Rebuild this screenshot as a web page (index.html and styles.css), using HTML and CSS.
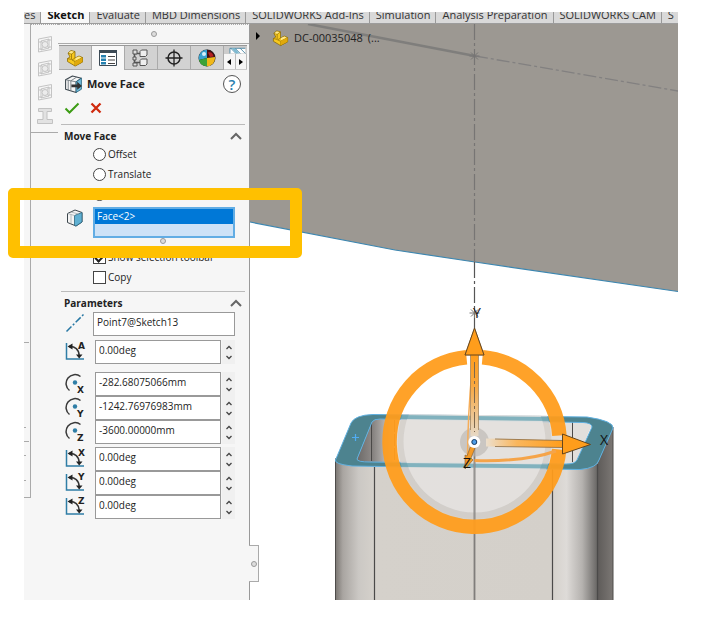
FILE: index.html
```
<!DOCTYPE html>
<html lang="en">
<head>
<meta charset="utf-8">
<title>Move Face</title>
<link rel="stylesheet" href="styles.css">
</head>
<body>
<svg class="defs" aria-hidden="true">
  <symbol id="i-part" viewBox="0 0 18 18">
    <path d="M2 4 5 1.500 9 2.500V9l4-2 3.500 1.500V13L9 17 1.500 12.500V9.500L4 8Z" fill="#f7c81e" stroke="#8a6a08" stroke-width=".8" stroke-linejoin="round"/>
    <path d="m9 9-3 2 3 1.500V17l7.500-4V8.500L9 12.500M2 4l3.500 1L9 2.500M5.500 5v5.500L1.500 9.500" fill="none" stroke="#8a6a08" stroke-width=".7"/>
    <path d="M9 12.500 16.500 8.500V13L9 17Z" fill="#e0a90c"/>
    <path d="M2.500 4 5 2l3 .7L5.500 4.500ZM9.500 9l3.500-1.500 2.500 1L9.500 11.500Z" fill="#ffe98c"/>
  </symbol>
  <symbol id="i-cube" viewBox="0 0 18 18">
    <path d="M1.500 4.500 9 1l7 2.500V13l-6 4-8.500-3.500Z" fill="#f4f4f4" stroke="#3c464d" stroke-width="1" stroke-linejoin="round"/>
    <path d="M8.500 6.500 16 3.500V13l-6 4-1.500-.5Z" fill="#5fb0d2" stroke="#2b6680" stroke-width=".8"/>
    <path d="m1.500 4.500 7 2M5 3l7.500 2M5 5.500V15" fill="none" stroke="#9aa3a8" stroke-width=".7"/>
  </symbol>
  <symbol id="i-ghost" viewBox="0 0 16 18">
    <path d="M1.500 4 14.500 1.500v13L1.500 17Z M4 6l8-2v9l-8 2Z M4 6l8 7M12 4 4 15M1.500 7h3m7-2h3m-13 9h3m7-2h3" fill="none" stroke="#c4c4c4"/>
    <circle cx="8" cy="9.500" r="3" fill="#ececec" stroke="#c4c4c4"/>
  </symbol>
  <symbol id="i-angle" viewBox="0 0 20 20">
    <path d="M1.500 2v16h17.500" fill="none" stroke="#2f7ea6" stroke-width="1.500"/>
    <path d="M4 5.500c6-.5 10 3 10.200 9" fill="none" stroke="#333" stroke-width="1.500"/>
    <path d="M2.500 5.500 7.500 2.500v6ZM11 13.500h6.500L14.200 17.500Z" fill="#222"/>
  </symbol>
  <symbol id="i-center" viewBox="0 0 20 20">
    <path d="M4.500 17.500A8.500 8.500 0 0 1 15.500 3.500" fill="none" stroke="#3a3a3a" stroke-width="1.500"/>
    <circle cx="10" cy="9.500" r="2.200" fill="#2f7ea6"/>
  </symbol>
  <symbol id="i-up" viewBox="0 0 8 5"><path d="m1.500 4 2.500-2.500L6.500 4" fill="none" stroke="#444" stroke-width="1.300"/></symbol>
  <symbol id="i-down" viewBox="0 0 8 5"><path d="M1.500 1 4 3.500 6.500 1" fill="none" stroke="#444" stroke-width="1.300"/></symbol>
  <symbol id="i-fold" viewBox="0 0 12 8"><path d="m1 7 5-5 5 5" fill="none" stroke="#666" stroke-width="2"/></symbol>
</svg>

<main class="app">
  <nav class="ribbon">
    <a class="ribbon-tab first" href="#">es</a>
    <a class="ribbon-tab active" href="#">Sketch</a>
    <a class="ribbon-tab" href="#">Evaluate</a>
    <a class="ribbon-tab" href="#">MBD Dimensions</a>
    <a class="ribbon-tab" href="#">SOLIDWORKS Add-Ins</a>
    <a class="ribbon-tab" href="#">Simulation</a>
    <a class="ribbon-tab" href="#">Analysis Preparation</a>
    <a class="ribbon-tab" href="#">SOLIDWORKS CAM</a>
    <a class="ribbon-tab last" href="#">S</a>
  </nav>

  <div class="work">
    <div class="edge" aria-hidden="true">
      <svg width="6" height="473" viewBox="0 0 6 473"><path d="M0 318.500h5M0 417.500h5M0 403.500h2M0 431.500h2M0 456.500h2" stroke="#aaa"/></svg>
    </div>

    <div class="tools">
      <button aria-label="Weldment"><svg><use href="#i-ghost"/></svg></button>
      <button aria-label="Gusset"><svg><use href="#i-ghost"/></svg></button>
      <button aria-label="End cap"><svg><use href="#i-ghost"/></svg></button>
      <button aria-label="Structural member"><svg viewBox="0 0 16 18"><path d="M1.500 1.500h13v3H10v8h5.500v4H.5v-4H6v-8H1.500Z" fill="#e2e2e2" stroke="#c2c2c2"/></svg></button>
    </div>

    <section class="panel">
      <div class="panel-grip"><i class="dot"></i></div>
      <div class="manager">
        <button class="m-tab" aria-label="Feature tree"><svg viewBox="0 0 18 18"><use href="#i-part"/></svg></button>
        <button class="m-tab active" aria-label="Properties"><svg viewBox="0 0 18 18">
          <path d="M.5 1.500h17v15H.5Z" fill="#fff" stroke="#3c4a55"/><path d="M0 1h18v3H0Z" fill="#3c4a55"/>
          <path d="M2 6h5v2.500H2Zm0 3.500h5V12H2ZM2 13h5v2.500H2Z" fill="#2581b0"/><path d="M9 7.500h7M9 11h7M9 14.500h7" stroke="#444"/></svg></button>
        <button class="m-tab" aria-label="Configurations"><svg viewBox="0 0 18 18">
          <path d="M2.500 1v16M2.500 4.500h6M2.500 13.500h6" fill="none" stroke="#555" stroke-width="1.500"/><path d="M1 1h4v4H1Zm0 7h3v3H1Zm0 6h4v3H1Z" fill="#ddd" stroke="#555"/>
          <path d="M8 2.500 9.500 1H15v5l-1.500 1.500H8ZM8 11.500 9.500 10H15v5l-1.500 1.500H8Z" fill="#eee" stroke="#555"/></svg></button>
        <button class="m-tab" aria-label="Dimensions"><svg viewBox="0 0 18 18"><circle cx="9" cy="9" r="6" fill="none" stroke="#222" stroke-width="1.500"/><path d="M9 .5v17M.5 9h17" stroke="#222" stroke-width="1.300"/></svg></button>
        <button class="m-tab" aria-label="Appearances"><svg viewBox="0 0 18 18">
          <circle cx="9" cy="9" r="8.500" fill="#222"/><path d="M9 9 1 11A8.200 8.200 0 0 1 9 .8Z" fill="#38a2cf"/><path d="M9 9V.8A8.200 8.200 0 0 1 17 8Z" fill="#401014"/><path d="M9 9 17 8A8.200 8.200 0 0 1 9 17.200Z" fill="#f0b81a"/><path d="M9 9v8.200A8.200 8.200 0 0 1 1 11Z" fill="#3da339"/><path d="M10 3.500c3-1 5 1 5.500 4L12 8Z" fill="#b52121"/><circle cx="6" cy="5" r="2" fill="#d6f0fb"/></svg></button>
        <div class="m-more">
          <svg viewBox="0 0 27 8"><path d="M7 8V2h18v6Z" fill="#fff"/><path d="M7 2h18M7 2v6M8 2l6 6M13 2l6 6M19 2l6 6" stroke="#3f7f9d" fill="none"/><path d="M9 2h4l5 6h-4Z" fill="#7db9d0"/></svg>
          <div class="m-arrows">
            <button aria-label="Previous tabs"><svg viewBox="0 0 6 8"><path d="M5 1v6L1 4Z"/></svg></button>
            <button aria-label="Next tabs"><svg viewBox="0 0 6 8"><path d="M1 1v6l4-3Z"/></svg></button>
          </div>
        </div>
      </div>

      <header class="title">
        <svg class="title-icon" viewBox="0 0 18 18">
          <path d="M1.500 4.500 8 1l8.500 2-5 3.500v10L1.500 13.500Z" fill="#f4f4f4" stroke="#3c464d" stroke-linejoin="round"/>
          <path d="m11.500 6.500 5-3.500v10.500l-5 3Z" fill="#6fbbdc" stroke="#2b6680" stroke-width=".8"/>
          <path d="m1.500 4.500 5 1V15M6.500 5.500 12 2M4 5v9.500M6.500 5.500l5 1" fill="none" stroke="#6b757b" stroke-width=".8"/>
          <path d="M7 9h5.500V6.500L17 10.500 12.500 14v-2.500H7Z" fill="#333"/>
        </svg>
        <h1>Move Face</h1>
        <button class="help" aria-label="Help">?</button>
      </header>

      <div class="confirm">
        <button aria-label="OK"><svg width="16" height="12" viewBox="0 0 16 12"><path d="M1.500 6.500 5.500 10.500 14.500 1.500" fill="none" stroke="#3c9c14" stroke-width="2"/></svg></button>
        <button aria-label="Cancel"><svg width="12" height="12" viewBox="0 0 12 12"><path d="m1.500 1.500 9 9M10.500 1.500l-9 9" fill="none" stroke="#cf2a0e" stroke-width="2.300"/></svg></button>
      </div>

      <section class="group">
        <div class="group-head"><h2>Move Face</h2><button aria-label="Collapse Move Face"><svg><use href="#i-fold"/></svg></button></div>
        <label class="choice"><input type="radio" name="mode">Offset</label>
        <label class="choice"><input type="radio" name="mode">Translate</label>
        <label class="choice"><input type="radio" name="mode">Rotate</label>
        <div class="pick">
          <svg class="pick-icon"><use href="#i-cube"/></svg>
          <ul class="pick-list" aria-label="Faces to move"><li>Face&lt;2&gt;</li></ul>
        </div>
        <div class="pick-grip"><i class="dot"></i></div>
        <label class="choice"><input type="checkbox" checked>Show selection toolbar</label>
        <label class="choice"><input type="checkbox">Copy</label>
      </section>

      <section class="group">
        <div class="group-head"><h2>Parameters</h2><button aria-label="Collapse Parameters"><svg><use href="#i-fold"/></svg></button></div>
        <div class="field axis">
          <svg viewBox="0 0 20 20"><path d="M1.500 18.500 18.500 1.500" stroke="#2878a4" stroke-width="1.500" stroke-dasharray="7 2 2 2"/></svg>
          <input aria-label="Axis" value="Point7@Sketch13">
        </div>
        <div class="field">
          <svg viewBox="0 0 20 20"><use href="#i-angle"/><text x="13" y="8">A</text></svg>
          <input aria-label="Angle" value="0.00deg">
          <span class="spin"><button aria-label="Increase"><svg><use href="#i-up"/></svg></button><button aria-label="Decrease"><svg><use href="#i-down"/></svg></button></span>
        </div>
        <div class="field-set origin">
          <div class="field">
            <svg viewBox="0 0 20 20"><use href="#i-center"/><text x="12" y="20">X</text></svg>
            <input aria-label="X origin" value="-282.68075066mm">
            <span class="spin"><button aria-label="Increase"><svg><use href="#i-up"/></svg></button><button aria-label="Decrease"><svg><use href="#i-down"/></svg></button></span>
          </div>
          <div class="field">
            <svg viewBox="0 0 20 20"><use href="#i-center"/><text x="12" y="20">Y</text></svg>
            <input aria-label="Y origin" value="-1242.76976983mm">
            <span class="spin"><button aria-label="Increase"><svg><use href="#i-up"/></svg></button><button aria-label="Decrease"><svg><use href="#i-down"/></svg></button></span>
          </div>
          <div class="field">
            <svg viewBox="0 0 20 20"><use href="#i-center"/><text x="12" y="20">Z</text></svg>
            <input aria-label="Z origin" value="-3600.00000mm">
            <span class="spin"><button aria-label="Increase"><svg><use href="#i-up"/></svg></button><button aria-label="Decrease"><svg><use href="#i-down"/></svg></button></span>
          </div>
        </div>
        <div class="field-set">
          <div class="field">
            <svg viewBox="0 0 20 20"><use href="#i-angle"/><text x="13" y="8">X</text></svg>
            <input aria-label="X angle" value="0.00deg">
            <span class="spin"><button aria-label="Increase"><svg><use href="#i-up"/></svg></button><button aria-label="Decrease"><svg><use href="#i-down"/></svg></button></span>
          </div>
          <div class="field">
            <svg viewBox="0 0 20 20"><use href="#i-angle"/><text x="13" y="8">Y</text></svg>
            <input aria-label="Y angle" value="0.00deg">
            <span class="spin"><button aria-label="Increase"><svg><use href="#i-up"/></svg></button><button aria-label="Decrease"><svg><use href="#i-down"/></svg></button></span>
          </div>
          <div class="field">
            <svg viewBox="0 0 20 20"><use href="#i-angle"/><text x="13" y="8">Z</text></svg>
            <input aria-label="Z angle" value="0.00deg">
            <span class="spin"><button aria-label="Increase"><svg><use href="#i-up"/></svg></button><button aria-label="Decrease"><svg><use href="#i-down"/></svg></button></span>
          </div>
        </div>
      </section>
    </section>

    <section class="viewport" aria-label="Model view">
      <svg class="scene" viewBox="250 24 428 576" preserveAspectRatio="xMinYMin slice">
        <defs>
          <linearGradient id="body" gradientUnits="userSpaceOnUse" x1="335" x2="598" y1="0" y2="0">
            <stop offset="0" stop-color="#77736f"/><stop offset=".03" stop-color="#a9a5a1"/><stop offset=".09" stop-color="#cbc8c4"/><stop offset=".15" stop-color="#d5d1cb"/>
            <stop offset=".82" stop-color="#d4d0ca"/><stop offset=".88" stop-color="#dedbd8"/><stop offset=".94" stop-color="#b5b2af"/><stop offset="1" stop-color="#656361"/>
          </linearGradient>
          <linearGradient id="side" x1="0" x2="1"><stop offset="0" stop-color="#5f5c5a"/><stop offset="1" stop-color="#7b7774"/></linearGradient>
          <linearGradient id="wall" gradientUnits="userSpaceOnUse" x1="356" x2="394" y1="0" y2="0">
            <stop offset="0" stop-color="#6a6765"/><stop offset=".42" stop-color="#8d8987"/><stop offset=".43" stop-color="#84807e"/><stop offset="1" stop-color="#d8d5d2"/>
          </linearGradient>
          <linearGradient id="up" x1="0" x2="0" y1="0" y2="1"><stop offset="0" stop-color="#ff9d1b"/><stop offset=".35" stop-color="#f9a63c"/><stop offset="1" stop-color="#e7d9c5"/></linearGradient>
          <linearGradient id="right"><stop offset="0" stop-color="#ecdfcd"/><stop offset=".4" stop-color="#fab65c"/><stop offset="1" stop-color="#ff9d1b"/></linearGradient>
          <clipPath id="solid"><path d="M335 460 352 422Q357 414 373 414L587 416Q613 418 613 427V600H335Z"/></clipPath>
        </defs>

        <path d="M250 24H678V291.500L475 262 395 250 250 222Z" fill="#9c9892"/>
        <path d="m250 222 145 28 80 12 203 29.500" fill="none" stroke="#3c86b0" stroke-width="1.200"/>
        <path d="m308 24 167 32" stroke="#7f7e7c" stroke-width="2.500"/>
        <path d="m475 56 203 35" stroke="#828080" stroke-width="1.300" stroke-dasharray="13 3 3 3"/>
        <path d="M474.500 24v238" stroke="#777574" stroke-width="1.200" stroke-dasharray="16 3 3 3"/>
        <path d="M474.500 262v66" stroke="#555" stroke-width="1.200" stroke-dasharray="16 3 3 3"/>
        <path id="star" d="M474.500 51v10M469.500 56h10M471 52.500l7 7M478 52.500l-7 7" stroke="#767574"/>
        <use href="#star" y="257"/>

        <path d="M335 458 352 466 587 468 598 463V600H335Z" fill="url(#body)"/>
        <path d="M598 462 613 427V600H598Z" fill="url(#side)"/>
        <path d="M357 459 372 422Q374 419 380 419L583 423Q592 423 591 427L577 460Q575 464 566 464L370 462Q358 463 357 459Z" fill="#e2dfdc"/>
        <path d="M357 459 372 422Q374 419 380 419H394V462.500L370 462Q358 463 357 459Z" fill="url(#wall)"/>
        <path d="M572.500 422v40M371.500 423v38" stroke="#4b4948"/>
        <path d="M394.500 420v43" stroke="#8b6d44" stroke-dasharray="12 2"/>
        <path d="M374.500 467V600M552.500 467V600M597.500 464V600" stroke="#4b4a49" stroke-width="1.200"/>
        <path d="M335.500 460V600M613 427V600" stroke="#4e4c4a"/>
        <path fill-rule="evenodd" d="M335.500 460 351 423Q355 415 373 414.500L587 417Q614 421 613 428L599 460Q597 468 580 469.500L352 466Q334 464 335.500 460ZM357 459Q357 462 370 462L566 464Q575 464 577 460L592 427Q592 423 583 422.500L380 419Q374 419 372 422Z" fill="#4d838f" stroke="#5fb0e0"/>
        <path d="M352 437.500h7M355.500 434v7" stroke="#50adf5" stroke-width="1.200"/>

        <g clip-path="url(#solid)">
          <circle cx="474.500" cy="441.500" r="77" fill="#d1cdc9" opacity=".72"/>
          <circle cx="474.500" cy="441.500" r="71" fill="#e7e5e2" opacity=".8"/>
          <path d="m399 417 152 2M399 465l152 1.500" stroke="#5fa3b3" stroke-width="4" opacity=".72"/>
        </g>
        <path d="M474.500 442V600" stroke="#777573" stroke-width="1.800" opacity=".9"/>
        <path d="M474.500 462V534" stroke="#a5a3a1" stroke-width="1.500" opacity=".6"/>

        <path d="M482.500 357.200A85 85 0 0 1 559.400 435.500M559.200 449.500A85 85 0 1 1 466.500 357.200" fill="none" stroke="#ff9c1c" stroke-width="14.500" opacity=".94"/>
        <circle cx="474.500" cy="442" r="14.500" fill="#b9b4af" opacity=".6"/>
        <path d="M474.500 460.500Q525 462 556 451" fill="none" stroke="#f5a449" stroke-width="3"/>
        <path d="M472 370Q468 412 467.500 456" fill="none" stroke="#f5ad59" stroke-width="1.500"/>
        <path d="M470.500 436V354.500H478.500V436Z" fill="url(#up)"/>
        <path d="M470.500 430V355H465L474.500 328 484 355H478.500V430" fill="none" stroke="#9a7a51" stroke-width=".7"/>
        <path d="M465 355 474.500 328 484 355Z" fill="#ff9d1b" stroke="#65451c"/>
        <path d="M474.500 362v70" stroke="#7d684e" stroke-dasharray="16 3 3 3"/>
        <path d="m486 438.500 77 2v7l-77-1Z" fill="url(#right)"/>
        <path d="m495 439 68 1.500M495 446.500l68 1" stroke="#8a6c45" stroke-width=".8"/>
        <path d="m562.500 434 28 10.500-28 9.500Z" fill="#ff9d1b" stroke="#65451c"/>
        <path d="m471 445 4 3-4 10 2 2-8 9v-14l2 1Z" fill="#f39a27" stroke="#80592b" stroke-width=".6"/>
        <circle cx="474.300" cy="442" r="6" fill="#fff"/>
        <circle cx="474.300" cy="442" r="2.500" fill="#4e9de8" stroke="#173c63"/>
        <text x="473" y="318">Y</text>
        <text x="600" y="445">X</text>
        <text x="463" y="468">Z</text>
      </svg>
      <div class="tree">
        <svg class="tree-arrow" viewBox="0 0 6 8"><path d="M1 0v8l4-4Z"/></svg>
        <svg class="tree-icon" viewBox="0 0 18 18"><use href="#i-part"/></svg>
        <span>DC-00035048</span><span>(...</span>
      </div>
      <button class="splitter" aria-label="Resize panel"><i class="dot"></i></button>
    </section>
  </div>
</main>
<div class="highlight" aria-hidden="true"></div>
</body>
</html>
```
FILE: styles.css
```
* { box-sizing: border-box; }

body {
  margin: 0;
  position: relative;
  background: #fff;
  color: #222;
  font: 10px/16px "Open Sans", "Noto Sans", sans-serif;
}

button {
  border: 0;
  padding: 0;
  background: none;
  display: grid;
  place-items: center;
  font-family: inherit;
}

h1, h2 { margin: 0; }
svg { display: block; }
.defs { position: absolute; width: 0; height: 0; }

.app {
  margin: 12px 39px 19px 24px;
  min-height: calc(100vh - 31px);
  display: flex;
  flex-direction: column;
  overflow: hidden;
}

/* Ribbon */
.ribbon {
  height: 12px;
  display: flex;
  align-items: flex-end;
  overflow: hidden;
  background: #d9d9d9;
  border-bottom: 1px solid #9c9c9c;
}
.ribbon-tab {
  flex: none;
  padding: 0 5px 0 6px;
  border-right: 1px solid #999;
  color: #333;
  font-size: 11px;
  text-decoration: none;
  white-space: nowrap;
}
.ribbon-tab.first { padding-left: 0; }
.ribbon-tab.last { flex: 1; border-right: 0; }
.ribbon-tab.active { background: #f8f8f8; color: #111; font-weight: 700; }

.work { flex: 1; display: flex; background: #f6f6f6; }

.edge {
  flex: none;
  width: 7px;
  height: 474px;
  border-right: 1px solid #aaa;
  border-bottom: 1px solid #aaa;
}

.tools {
  flex: none;
  width: 27px;
  height: 109px;
  padding: 7px 0 4px;
  display: flex;
  flex-direction: column;
  border-top: 1px dotted #aaa;
  border-bottom: 1px solid #aaa;
}
.tools button { height: 24px; }
.tools svg { width: 16px; height: 18px; }

/* Property panel */
.panel {
  flex: none;
  width: 192px;
  border-top: 1px dotted #aaa;
  border-right: 1px solid #999;
}
.dot {
  width: 6px;
  height: 6px;
  border: 1px solid #999;
  border-radius: 50%;
  background: #ddd;
}
.panel-grip {
  height: 19px;
  display: grid;
  place-items: center;
  border-bottom: 1px solid #aaa;
}
.manager {
  height: 25px;
  margin: 1px 2px 0 1px;
  display: flex;
  border-top: 1px solid #999;
}
.m-tab {
  width: 33px;
  background: #d2d2d2;
  border-right: 1px solid #aaa;
  border-bottom: 1px solid #aaa;
}
.m-tab.active { background: #f8f8f8; border-bottom: 0; }
.m-tab svg { width: 18px; height: 18px; }
.m-more { flex: 1; background: #ccc; }
.m-more > svg { width: 100%; height: 8px; }
.m-arrows { display: flex; height: 15px; }
.m-arrows button { flex: 1; background: #f6f6f6; border-right: 1px solid #bbb; }
.m-arrows svg { width: 6px; height: 8px; }

.title {
  height: 28px;
  padding: 0 8px 0 6px;
  display: flex;
  align-items: center;
  gap: 4px;
}
.title-icon { width: 19px; height: 19px; }
.title h1 { flex: 1; font-size: 11px; }
.help {
  width: 18px;
  height: 18px;
  border: 1px solid #555;
  border-radius: 50%;
  background: #fff;
  color: #2a7fae;
  font-size: 15px;
  font-weight: 600;
  line-height: 16px;
}
.confirm {
  height: 20px;
  margin-bottom: 6px;
  padding-left: 6px;
  display: flex;
  align-items: center;
  gap: 10px;
}

.group {
  margin: 0 4px 4px 3px;
  padding-top: 2px;
  border-top: 1px solid #bbb;
}
.group-head {
  height: 17px;
  padding: 0 3px;
  display: flex;
  align-items: center;
  justify-content: space-between;
}
.group-head h2 { font-size: 10px; }
.group-head svg { width: 12px; height: 8px; }

.choice {
  height: 20px;
  padding-left: 32px;
  display: flex;
  align-items: center;
  gap: 2px;
}
.choice input {
  appearance: none;
  width: 13px;
  height: 13px;
  margin: 0;
  border: 1px solid #444;
  background: #fff;
}
.choice input[type="radio"] { border-radius: 50%; }
.choice input[type="radio"]:checked { box-shadow: inset 0 0 0 2px #fff; background: #333; }
.choice input[type="checkbox"]:checked { display: grid; place-items: center; }
.choice input[type="checkbox"]:checked::after {
  content: "";
  width: 4px;
  height: 8px;
  border: solid #222;
  border-width: 0 2px 2px 0;
  transform: rotate(45deg);
}

.pick { margin-top: 3px; padding: 0 10px 0 5px; display: flex; }
.pick-icon { flex: none; width: 18px; height: 18px; margin: 2px 9px 0 0; }
.pick-list {
  flex: 1;
  height: 31px;
  margin: 0;
  padding: 0;
  border: 2px solid #62ade4;
  background: #cde2f7;
  list-style: none;
}
.pick-list li { padding-left: 2px; background: #0078d7; color: #fff; line-height: 15px; }
.pick-grip { height: 9px; padding-left: 20px; display: flex; justify-content: center; }

.field {
  height: 24px;
  padding: 0 10px 0 4px;
  display: flex;
}
.field > svg { flex: none; width: 20px; height: 20px; margin: 1px 10px 0 0; overflow: visible; }
.field > svg text { font: 700 9px "DejaVu Sans", sans-serif; fill: #222; }
.field input {
  flex: 1;
  min-width: 0;
  height: 24px;
  padding: 0 3px 4px;
  border: 1px solid #999;
  background: #fff;
  color: #222;
  font: inherit;
}
.axis { margin: 1px 0 4px; }
.axis > svg { margin-right: 8px; }
.field-set { margin-top: 3px; }
.origin { margin-top: 8px; }
.spin {
  width: 13px;
  margin-left: 1px;
  padding: 2px 0;
  display: flex;
  flex-direction: column;
  background: #f0f0f0;
}
.spin button { flex: 1; }
.spin svg { width: 8px; height: 5px; }

/* Model view */
.viewport { flex: 1; position: relative; min-width: 0; background: #fff; }
.scene { width: 100%; height: 100%; }
.scene text { font: 14px "Open Sans", sans-serif; fill: #111; }
.tree {
  position: absolute;
  top: 5px;
  left: 5px;
  display: flex;
  align-items: center;
  gap: 5px;
  font-size: 11px;
}
.tree-arrow { width: 6px; height: 8px; margin: 0 6px 4px 0; }
.tree-icon { width: 17px; height: 18px; }
.splitter {
  position: absolute;
  left: -1px;
  bottom: 18px;
  width: 10px;
  height: 37px;
  border: 1px solid #aaa;
  border-left: 0;
  background: #f6f6f6;
}

/* Callout frame laid over the selection list */
.highlight {
  position: absolute;
  top: 188px;
  left: 8px;
  width: 294px;
  height: 70px;
  border: 12px solid #ffc000;
  border-radius: 5px;
}
```
